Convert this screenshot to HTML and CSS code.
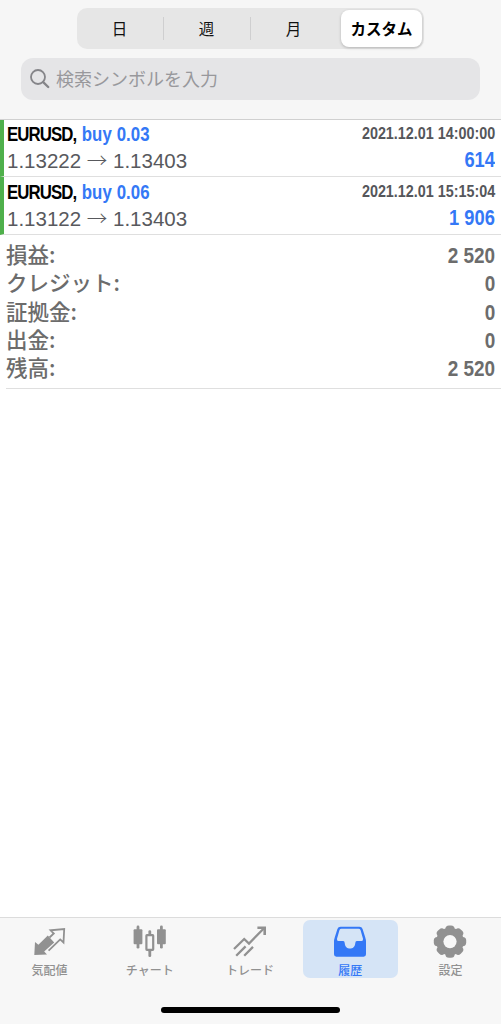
FILE: index.html
```
<!DOCTYPE html>
<html lang="ja">
<head>
    <meta charset="UTF-8">
    <meta name="viewport" content="width=device-width, initial-scale=1.0">
    <title>履歴</title>
    <link rel="stylesheet" href="styles.css">
</head>
<body>
    <header class="top">
        <div class="segments">
            <button class="segment">日</button>
            <button class="segment">週</button>
            <button class="segment">月</button>
            <button class="segment selected">カスタム</button>
        </div>
        <div class="search">
            <svg width="20" height="20" viewBox="0 0 20 20" fill="none" stroke="#858589" stroke-linecap="round">
                <circle cx="8" cy="8" r="7" stroke-width="1.8"/>
                <path d="M13.2 13.2L18.2 18" stroke-width="2.4"/>
            </svg>
            <span>検索シンボルを入力</span>
        </div>
    </header>

    <main>
        <ul class="deals">
            <li class="deal">
                <div class="line">
                    <span class="symbol">EURUSD, <span class="side">buy 0.03</span></span>
                    <time class="date">2021.12.01 14:00:00</time>
                </div>
                <div class="line">
                    <span class="price">1.13222 <span class="arrow">→</span> 1.13403</span>
                    <span class="profit">614</span>
                </div>
            </li>
            <li class="deal">
                <div class="line">
                    <span class="symbol">EURUSD, <span class="side">buy 0.06</span></span>
                    <time class="date">2021.12.01 15:15:04</time>
                </div>
                <div class="line">
                    <span class="price">1.13122 <span class="arrow">→</span> 1.13403</span>
                    <span class="profit">1 906</span>
                </div>
            </li>
        </ul>

        <dl class="summary">
            <div class="total"><dt>損益:</dt><dd>2 520</dd></div>
            <div class="total"><dt>クレジット:</dt><dd>0</dd></div>
            <div class="total"><dt>証拠金:</dt><dd>0</dd></div>
            <div class="total"><dt>出金:</dt><dd>0</dd></div>
            <div class="total"><dt>残高:</dt><dd>2 520</dd></div>
        </dl>
    </main>

    <footer class="bottom">
        <nav class="tabs">
            <a class="tab">
                <svg width="36" height="36" viewBox="0 0 36 36">
                    <path d="M2.3 31L3 18L6.4 20.8L15.8 11.6L22.2 18.6L12.2 27.6L15 30.5Z" fill="#919191"/>
                    <path d="M17.5 13.5L21.8 9.5L18.6 6.3L32.2 5L31.5 18.5L28.2 15.4L16.6 26.7" fill="none" stroke="#919191" stroke-width="1.8"/>
                </svg>
                <span>気配値</span>
            </a>
            <a class="tab">
                <svg width="36" height="36" viewBox="0 0 36 36" fill="#919191">
                    <rect x="1.6" y="5.2" width="8.8" height="15" rx="1"/>
                    <rect x="4.6" y="1.6" width="2.8" height="23" rx="1.3"/>
                    <rect x="25" y="5.2" width="8.8" height="15" rx="1"/>
                    <rect x="28" y="1.6" width="2.8" height="23" rx="1.3"/>
                    <rect x="14.4" y="11.2" width="6.8" height="14.6" rx="0.5" fill="none" stroke="#919191" stroke-width="2.2"/>
                    <rect x="16.4" y="6.2" width="2.8" height="5" rx="1.3"/>
                    <rect x="16.4" y="26" width="2.8" height="7" rx="1.3"/>
                </svg>
                <span>チャート</span>
            </a>
            <a class="tab">
                <svg width="36" height="36" viewBox="0 0 36 36" fill="none" stroke="#919191" stroke-width="2.3">
                    <path d="M2 25L12.2 15L17 19.6L32 4.2"/>
                    <path d="M25.4 3.7H32.7V11" stroke-width="2.6"/>
                    <path d="M4.2 31.7L13.6 22.4M12.2 31.7L21 22.9"/>
                </svg>
                <span>トレード</span>
            </a>
            <a class="tab active">
                <svg width="36" height="36" viewBox="0 0 36 36">
                    <path fill-rule="evenodd" fill="#3478f6" d="M8.5 2.8H27.5Q29.8 2.8 30.6 4.9L33.2 13.3Q34 15.8 34 17.5V30.3Q34 32.7 31.6 32.7H4.4Q2 32.7 2 30.3V17.5Q2 15.8 2.8 13.3L5.4 4.9Q6.2 2.8 8.5 2.8ZM9.4 4.7Q8 4.7 7.5 6.1L5 14.8Q4.6 17.1 6.4 17.1H11.2Q12.6 17.1 12.7 18.9C13 26.5 23 26.5 23.3 18.9Q23.4 17.1 24.8 17.1H29.6Q31.4 17.1 31 14.8L28.5 6.1Q28 4.7 26.6 4.7Z"/>
                </svg>
                <span>履歴</span>
            </a>
            <a class="tab">
                <svg width="36" height="36" viewBox="0 0 36 36">
                    <g fill="#919191">
                        <rect x="13.4" y="1.4" width="9.2" height="32.4" rx="3.6"/>
                        <rect x="13.4" y="1.4" width="9.2" height="32.4" rx="3.6" transform="rotate(45 18 17.6)"/>
                        <rect x="13.4" y="1.4" width="9.2" height="32.4" rx="3.6" transform="rotate(90 18 17.6)"/>
                        <rect x="13.4" y="1.4" width="9.2" height="32.4" rx="3.6" transform="rotate(135 18 17.6)"/>
                        <circle cx="18" cy="17.6" r="13.8"/>
                    </g>
                    <circle cx="18" cy="17.6" r="6.6" fill="#f7f7f7"/>
                </svg>
                <span>設定</span>
            </a>
        </nav>
        <div class="home-bar"></div>
    </footer>
</body>
</html>
```
FILE: styles.css
```
* {
    margin: 0;
    padding: 0;
    box-sizing: border-box;
}

body {
    display: flex;
    flex-direction: column;
    height: 1024px;
    background: #fff;
    font-family: "Liberation Sans", "Noto Sans CJK JP", sans-serif;
    overflow: hidden;
}

/* Header */
.top {
    height: 120px;
    padding: 8px 21px 0;
    background: #f6f6f6;
    border-bottom: 1px solid #d0d0d0;
}

.segments {
    display: grid;
    grid-template-columns: 87px 87px 87px 1fr;
    width: 347px;
    height: 41px;
    margin: 0 auto 9px 56px;
    padding: 2px 2px 2px 0;
    background: #e6e6e6;
    border-radius: 10px;
}

.segment {
    position: relative;
    padding-right: 2px;
    border: none;
    background: none;
    font-family: "Noto Sans CJK JP", sans-serif;
    font-size: 15.5px;
    line-height: 37px;
    color: #111;
}

.segment:nth-child(-n+2)::after {
    content: "";
    position: absolute;
    top: 7px;
    right: 0;
    width: 1px;
    height: 23px;
    background: #cfcfd0;
}

.segment.selected {
    margin-left: 3px;
    padding-right: 0;
    background: #fff;
    border-radius: 8px;
    box-shadow: 0 1px 3px rgba(0, 0, 0, 0.22);
    font-weight: bold;
    color: #000;
}

.search {
    display: flex;
    align-items: center;
    gap: 6px;
    width: 459px;
    height: 42px;
    padding-left: 9px;
    background: #e5e5e7;
    border-radius: 12px;
    font-family: "Noto Sans CJK JP", sans-serif;
    font-size: 18px;
    color: #98989c;
}

.search span {
    padding-bottom: 2px;
}

/* Deals */
.deals {
    list-style: none;
}

.deal {
    height: 58px;
    padding: 1px 6px 0 3px;
    border-left: 4px solid #4fb04b;
    border-bottom: 1px solid #dfdfdf;
}

.deal:first-child {
    height: 57px;
    padding-top: 0;
}

.line {
    display: flex;
    justify-content: space-between;
    height: 27px;
    line-height: 27px;
    white-space: nowrap;
}

/* Condensed bold */
.symbol,
.date,
.profit,
.total dd {
    font-weight: bold;
    transform: scaleX(0.86);
    transform-origin: right;
}

.symbol {
    font-size: 20.5px;
    letter-spacing: -1.1px;
    color: #000;
    transform: scaleX(0.82);
    transform-origin: left;
}

.side {
    margin-left: 2px;
    letter-spacing: 0.1px;
}

.side,
.profit {
    color: #3478f6;
}

.date {
    font-size: 16.5px;
    color: #55565a;
    transform: scaleX(0.87);
}

.price {
    font-size: 20.5px;
    color: #58595d;
}

.arrow {
    font-family: "Noto Sans CJK JP", sans-serif;
    font-weight: 300;
    line-height: 1;
}

.profit {
    font-size: 21.5px;
    transform: scaleX(0.85);
}

/* Totals */
.summary {
    height: 154px;
    margin-left: 6px;
    padding: 6px 6px 0 0;
    border-bottom: 1px solid #dfdfdf;
}

.total {
    display: flex;
    justify-content: space-between;
    height: 28.3px;
    line-height: 28.3px;
    color: #6c6c6c;
}

.total dt {
    font-family: "Noto Sans CJK JP", sans-serif;
    font-size: 21.5px;
    font-weight: 500;
    line-height: 26.3px;
}

.total dd {
    font-size: 22px;
    line-height: 29px;
}

/* Tab bar */
.bottom {
    height: 107px;
    margin-top: auto;
    background: #f7f7f7;
    border-top: 1px solid #dcdcdc;
}

.tabs {
    display: grid;
    grid-template-columns: repeat(5, 1fr);
    padding-top: 2px;
}

.tab {
    display: flex;
    flex-direction: column;
    align-items: center;
    height: 58px;
    margin: 0 3px 0 2px;
    padding-top: 4px;
    border-radius: 7px;
    font-family: "Noto Sans CJK JP", sans-serif;
    font-size: 12px;
    font-weight: 500;
    line-height: 20px;
    color: #919191;
}

.tab svg {
    flex-shrink: 0;
}

.tab.active {
    background: #d5e4f6;
    color: #3478f6;
}

.home-bar {
    width: 179px;
    height: 6px;
    margin: 29px auto 0;
    background: #000;
    border-radius: 3px;
}
```
